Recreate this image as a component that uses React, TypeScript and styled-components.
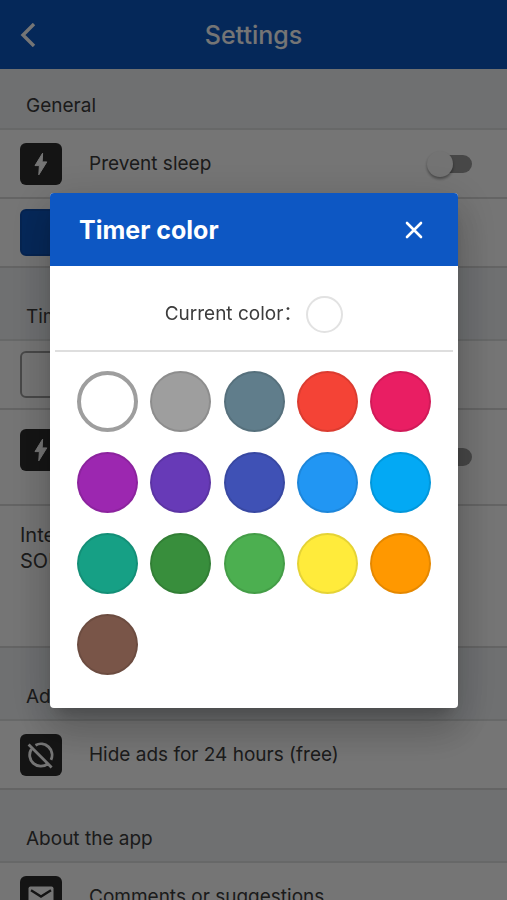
import React, { useState } from "react";
import styled, { createGlobalStyle } from "styled-components";

const GlobalStyle = createGlobalStyle`
  * { box-sizing: border-box; }
  body {
    margin: 0;
    overflow: hidden;
    background: #fff;
    color: #3c3c3c;
    font-family: Inter, "Noto Sans CJK SC", sans-serif;
    font-size: 19px;
    line-height: 26px;
  }
  button, input { font: inherit; margin: 0; }
`;

const TopBar = styled.header`
  display: grid;
  grid-template-columns: 56px 1fr 56px;
  align-items: center;
  height: 69px;
  background: #0d57c3;
  color: #fff;
`;

const TopTitle = styled.h1`
  margin: 0;
  font-size: 25px;
  font-weight: 500;
  line-height: 32px;
  text-align: center;
`;

const IconButton = styled.button`
  display: flex;
  align-items: center;
  justify-content: center;
  width: 56px;
  height: 56px;
  padding: 0;
  border: 0;
  background: none;
  color: inherit;
  cursor: pointer;
`;

const SectionTitle = styled.h2<{ $compact?: boolean }>`
  display: flex;
  align-items: flex-end;
  height: ${(p) => (p.$compact ? 61 : 73)}px;
  margin: 0;
  padding: 0 26px 9px;
  border-bottom: 2px solid #e0e3e3;
  background: #f1f4f7;
  font-size: 19px;
  font-weight: 400;
`;

const Row = styled.div<{ $tall?: boolean }>`
  display: flex;
  align-items: center;
  gap: 27px;
  height: ${(p) => (p.$tall ? 96 : 69)}px;
  padding: 0 35px 0 20px;
  border-bottom: 2px solid #dadada;
`;

const RowLabel = styled.label`
  flex: 1;
`;

const Tile = styled.span<{ $top?: boolean }>`
  display: flex;
  align-items: center;
  justify-content: center;
  align-self: ${(p) => (p.$top ? "flex-start" : "auto")};
  width: 42px;
  height: 42px;
  margin-top: ${(p) => (p.$top ? 19 : 0)}px;
  border-radius: 6px;
  background: #2d2d2d;
  color: #fff;
`;

const ColorSwatch = styled.button<{ $color: string; $edge: string }>`
  width: 96px;
  height: 47px;
  padding: 0;
  border: 2px solid ${(p) => p.$edge};
  border-radius: 6px;
  background: ${(p) => p.$color};
`;

const Toggle = styled.input`
  appearance: none;
  display: grid;
  align-items: center;
  width: 45px;
  height: 26px;
  &::before,
  &::after {
    content: "";
    grid-area: 1 / 1;
  }
  &::before {
    justify-self: end;
    width: 36px;
    height: 18px;
    border-radius: 9px;
    background: #9b9b9b;
  }
  &::after {
    width: 26px;
    height: 26px;
    border-radius: 50%;
    background: #fafafa;
    box-shadow: 0 2px 3px rgba(0, 0, 0, 0.4);
  }
  &:checked::after {
    justify-self: end;
  }
`;

const Note = styled.div`
  height: 142px;
  padding: 16px 20px;
  border-bottom: 2px solid #dadada;
  font-size: 20px;
`;

const Overlay = styled.div`
  position: fixed;
  inset: 0;
  display: flex;
  align-items: center;
  justify-content: center;
  padding: 1px 49px 0 50px;
  background: rgba(0, 0, 0, 0.54);
`;

const Dialog = styled.section`
  width: 100%;
  overflow: hidden;
  border-radius: 4px;
  background: #fff;
  box-shadow: 0 11px 15px -7px rgba(0, 0, 0, 0.2), 0 24px 38px 3px rgba(0, 0, 0, 0.14),
    0 9px 46px 8px rgba(0, 0, 0, 0.12);
`;

const DialogHeader = styled.header`
  display: flex;
  align-items: center;
  justify-content: space-between;
  height: 73px;
  padding: 0 16px 0 29px;
  background: #0d57c3;
  color: #fff;
`;

const DialogTitle = styled.h2`
  margin: 0;
  font-size: 25px;
  font-weight: 700;
  line-height: 32px;
`;

const Current = styled.div`
  display: flex;
  align-items: center;
  justify-content: center;
  height: 86px;
  margin: 0 5px;
  padding-top: 12px;
  border-bottom: 2px solid #dedede;
`;

const CurrentDot = styled.span<{ $color: string }>`
  width: 37px;
  height: 37px;
  margin-left: 4px;
  border: 2px solid #e2e2e2;
  border-radius: 50%;
  background: ${(p) => p.$color};
`;

const Palette = styled.div`
  display: grid;
  grid-template-columns: repeat(5, 61px);
  justify-content: space-between;
  row-gap: 20px;
  padding: 19px 27px 33px;
`;

const Choice = styled.input<{ $color: string }>`
  appearance: none;
  width: 61px;
  height: 61px;
  border: 2px solid rgba(0, 0, 0, 0.1);
  border-radius: 50%;
  background: ${(p) => p.$color};
  cursor: pointer;
  &:checked {
    border: 4px solid #9e9e9e;
  }
`;

const colors: [string, string][] = [
  ["White", "#ffffff"], ["Gray", "#9e9e9e"], ["Blue gray", "#607d8b"], ["Red", "#f44336"], ["Pink", "#e91e63"],
  ["Purple", "#9c27b0"], ["Deep purple", "#673ab7"], ["Indigo", "#3f51b5"], ["Blue", "#2196f3"], ["Light blue", "#03a9f4"],
  ["Teal", "#16a085"], ["Dark green", "#388e3c"], ["Green", "#4caf50"], ["Yellow", "#ffeb3b"], ["Orange", "#ff9800"],
  ["Brown", "#795548"],
];

const Bolt = () => (
  <svg width="42" height="42" viewBox="0 0 42 42" fill="currentColor" stroke="currentColor" strokeLinejoin="round" aria-hidden="true">
    <path d="M22.6 10.2 15 22.6h4.4l-.6 9.2 8-12.900h-4.600z" />
  </svg>
);

const NoAds = () => (
  <svg width="42" height="42" viewBox="0 0 42 42" fill="none" stroke="currentColor" strokeWidth="2.8" aria-hidden="true">
    <path d="M15.5 11.2A11.2 11.2 0 0 1 31 25.8M27.8 29.8A11.2 11.2 0 0 1 11.3 15.2M8.6 10.4l23 23" />
  </svg>
);

const Mail = () => (
  <svg width="42" height="42" viewBox="0 0 42 42" aria-hidden="true">
    <rect x="8.5" y="10.5" width="25" height="20" rx="2" fill="currentColor" />
    <path d="M11 14.3l10 6.3 10-6.3" fill="none" stroke="#2d2d2d" strokeWidth="2.4" />
  </svg>
);

export default function App() {
  const [color, setColor] = useState("#ffffff");
  const [open, setOpen] = useState(true);

  return (
    <>
      <GlobalStyle />
      <TopBar>
        <IconButton aria-label="Back">
          <svg width="24" height="24" viewBox="0 0 24 24" fill="none" stroke="currentColor" strokeWidth="3.4">
            <path d="M18 1 7 12l11 11" />
          </svg>
        </IconButton>
        <TopTitle>Settings</TopTitle>
      </TopBar>
      <main>
        <SectionTitle $compact>General</SectionTitle>
        <Row>
          <Tile><Bolt /></Tile>
          <RowLabel htmlFor="sleep">Prevent sleep</RowLabel>
          <Toggle id="sleep" type="checkbox" role="switch" />
        </Row>
        <Row>
          <ColorSwatch $color="#0d57c3" $edge="#0d4eb0" aria-label="Theme color" />
        </Row>
        <SectionTitle>Timer</SectionTitle>
        <Row>
          <ColorSwatch $color={color} $edge="#9e9e9e" aria-label="Timer color" onClick={() => setOpen(true)} />
        </Row>
        <Row $tall>
          <Tile $top><Bolt /></Tile>
          <RowLabel htmlFor="flash" />
          <Toggle id="flash" type="checkbox" role="switch" aria-label="Flash" />
        </Row>
        <Note>
          Interval
          <br />
          SOUND
        </Note>
        <SectionTitle>Ads</SectionTitle>
        <Row>
          <Tile><NoAds /></Tile>
          <span>Hide ads for 24 hours (free)</span>
        </Row>
        <SectionTitle>About the app</SectionTitle>
        <Row>
          <Tile><Mail /></Tile>
          <span>Comments or suggestions</span>
        </Row>
      </main>
      {open && (
        <Overlay>
          <Dialog role="dialog" aria-modal="true" aria-labelledby="dialog-title">
            <DialogHeader>
              <DialogTitle id="dialog-title">Timer color</DialogTitle>
              <IconButton aria-label="Close" onClick={() => setOpen(false)}>
                <svg width="20" height="20" viewBox="0 0 20 20" fill="none" stroke="currentColor" strokeWidth="2.6" strokeLinecap="round">
                  <path d="m3 3 14 14M17 3 3 17" />
                </svg>
              </IconButton>
            </DialogHeader>
            <Current>
              Current color：
              <CurrentDot $color={color} />
            </Current>
            <Palette role="radiogroup" aria-labelledby="dialog-title">
              {colors.map(([name, value]) => (
                <Choice
                  key={value}
                  type="radio"
                  name="timer-color"
                  aria-label={name}
                  $color={value}
                  checked={color === value}
                  onChange={() => setColor(value)}
                />
              ))}
            </Palette>
          </Dialog>
        </Overlay>
      )}
    </>
  );
}
